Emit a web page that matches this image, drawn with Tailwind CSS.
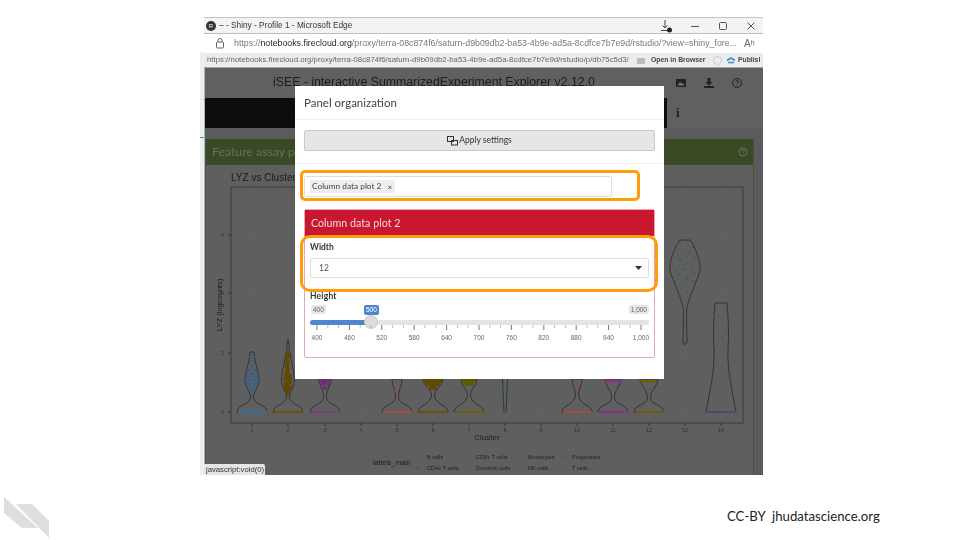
<!DOCTYPE html>
<html>
<head>
<meta charset="utf-8">
<script src="https://cdn.jsdelivr.net/npm/@tailwindcss/browser@4"></script>
</head>
<body class="bg-white">
<div class="relative w-[960px] h-[540px] overflow-hidden bg-white font-['Lato',sans-serif]">

  <!-- Sliver of the page behind the window -->
  <div class="absolute left-[200px] top-[52px] w-[4px] h-[423px] bg-[#eeeeee] blur-[0.45px]">
    <div class="mt-[47px] h-px bg-[#e6dfa0]"></div>
    <div class="mt-[37px] h-px bg-[#5b7fc4]"></div>
  </div>

  <!-- Screenshot of the browser window -->
  <div class="absolute left-[204px] top-[17px] w-[559px] h-[458px] flex flex-col blur-[0.45px] border-t border-[#c4c4c4]">
    <div class="h-[16px] shrink-0 bg-[#f3f3f3] border-b border-[#bdbdbd] flex items-center pl-[2px] font-['Liberation_Sans',sans-serif] text-[8.300px] text-[#333] whitespace-nowrap">
      <div class="w-[10px] h-[10px] shrink-0 rounded-full bg-[#333] text-white text-[6px] leading-[10px] text-center mr-[3px]">R</div>
      <span>– - Shiny - Profile 1 - Microsoft Edge</span>
      <div class="ml-auto flex items-center h-full">
        <svg class="w-[14px] h-[14px] mr-[16px]" viewBox="0 0 14 14" fill="none" stroke="#444" stroke-width="1"><path d="M5 1v8M2.500 6.500 5 9l2.500-2.500M1 11.500h7"/><circle cx="9.500" cy="11" r="2.500" fill="#222" stroke="none"/></svg>
        <svg class="w-[10px] h-[10px] mr-[18px]" viewBox="0 0 10 10" stroke="#555"><path d="M1 5.500h8"/></svg>
        <svg class="w-[10px] h-[10px] mr-[18px]" viewBox="0 0 10 10" fill="none" stroke="#555"><rect x="1.500" y="1.500" width="7" height="7" rx="1"/></svg>
        <svg class="w-[10px] h-[10px] mr-[7px]" viewBox="0 0 10 10" stroke="#555"><path d="M1.500 1.500l7 7M8.500 1.500l-7 7"/></svg>
      </div>
    </div>
    <div class="h-[19px] shrink-0 bg-white flex items-center pl-[11px] font-['Liberation_Sans',sans-serif] text-[8.800px] text-[#777] whitespace-nowrap overflow-hidden">
      <svg class="w-[10px] h-[11px] shrink-0 mr-[9px]" viewBox="0 0 10 11" fill="none" stroke="#666"><rect x="1.500" y="4" width="7" height="6" rx="1"/><path d="M3 4V2.500a2 2 0 0 1 4 0V4"/></svg>
      <span class="w-[501px] shrink-0">https://<span class="text-[#222]">notebooks.firecloud.org</span>/proxy/terra-08c874f6/saturn-d9b09db2-ba53-4b9e-ad5a-8cdfce7b7e9d/rstudio/?view=shiny_fore...</span>
      <span class="ml-[9px] text-[10px] text-[#666]">Aʰ</span>
    </div>
    <div class="h-[15px] shrink-0 bg-[#ececec] border-b border-[#9aa5b5] flex items-center pl-[3px] font-['Liberation_Sans',sans-serif] text-[7.800px] text-[#666] whitespace-nowrap overflow-hidden">
      <span class="w-[424px] overflow-hidden shrink-0">https://notebooks.firecloud.org/proxy/terra-08c874f6/saturn-d9b09db2-ba53-4b9e-ad5a-8cdfce7b7e9d/rstudio/p/db75c5d3/</span>
      <svg class="w-[9px] h-[9px] shrink-0 ml-[6px] mr-[5px]" viewBox="0 0 9 9"><rect x="0" y="2" width="8" height="6" fill="#bbb"/></svg>
      <b class="text-[#444] text-[6.800px] w-[53px] shrink-0">Open in Browser</b>
      <div class="w-[9px] h-[9px] shrink-0 rounded-full border border-[#ccc] ml-[9px]"></div>
      <svg class="w-[10px] h-[9px] shrink-0 ml-[4px] mr-[2px]" viewBox="0 0 10 9" fill="none" stroke="#3b8ec9" stroke-width="1.500"><path d="M1 4.500 5 2l4 2.500M2 6.500h6"/></svg>
      <b class="text-[#444] text-[6.800px] w-[22px] shrink-0 overflow-hidden">Publish</b>
    </div>

    <div class="flex-1 bg-[#606060] flex flex-col min-h-0 border-l border-[#a9b4c2]">
      <div class="h-[30px] shrink-0 relative flex items-center font-['Liberation_Sans',sans-serif] text-[12.300px] text-[#1c1c1c] whitespace-nowrap">
        <span class="ml-[68px] -mt-[2px]">iSEE - interactive SummarizedExperiment Explorer v2.12.0</span>
        <div class="ml-auto flex items-center gap-[16px] pr-[20px]">
          <svg class="w-[12px] h-[12px]" viewBox="0 0 12 12"><path d="M1 2h10v8H1z" fill="#222"/><path d="M2.500 8.500 5 5l2 2 1-1 1.500 2.500z" fill="#777"/></svg>
          <svg class="w-[12px] h-[12px]" viewBox="0 0 12 12" fill="#222"><path d="M4.500 1h3v4h2L6 8.500 2.500 5h2zM1 9h10v2H1z"/></svg>
          <svg class="w-[12px] h-[12px]" viewBox="0 0 12 12" fill="none" stroke="#222"><circle cx="6" cy="6" r="4.500"/><path d="M4.700 4.800a1.300 1.300 0 1 1 1.900 1.200c-.4.200-.6.500-.6 1M6 8v1"/></svg>
        </div>
      </div>
      <div class="h-[30px] shrink-0 flex">
        <div class="w-[462px] bg-[#0d0d0d]"></div>
        <div class="flex-1 flex items-center pl-[9px] font-['Liberation_Serif',serif] text-[13px] font-bold text-[#222]">i</div>
      </div>
      <div class="flex-1 min-h-0 bg-[#5a5b5c] pt-[11px] pr-[9px]">
        <div class="h-full border-x border-[#465438] bg-[#5f5f5f] flex flex-col">
          <div class="h-[26px] shrink-0 bg-[#3a4a24] flex items-center px-[6px] text-[12.300px] text-[#66735a] relative">
            <span>Feature assay plot 1</span>
            <svg class="absolute right-[5px] w-[10px] h-[10px]" viewBox="0 0 10 10" fill="none" stroke="#66735a"><circle cx="5" cy="5" r="4"/><path d="M5 7.500v.5M3.800 4a1.200 1.200 0 1 1 1.800 1c-.4.300-.6.500-.6 1"/></svg>
          </div>
          <svg class="flex-1 w-[546px] block font-['Liberation_Sans',sans-serif]" viewBox="206 165 546 310" fill="none">
            <g stroke="#666" stroke-width=".6">
              <path d="M231 412H743M231 353H743M231 293H743M231 235H743"/>
              <path d="M252 187V423M288 187V423M325 187V423M361 187V423M397 187V423M433 187V423M469 187V423M505 187V423M541 187V423M577 187V423M613 187V423M649 187V423M685 187V423M721 187V423"/>
            </g>
            <rect x="231" y="187" width="512" height="236" stroke="#3d3d3d"/>
            <path d="M228 412h3M228 353h3M228 293h3M228 235h3M252 423v3M288 423v3M325 423v3M361 423v3M397 423v3M433 423v3M469 423v3M505 423v3M541 423v3M577 423v3M613 423v3M649 423v3M685 423v3M721 423v3" stroke="#333"/>
            <text x="231" y="181" font-size="10" fill="#1c1c1c">LYZ vs Cluster</text>
            <text x="0" y="0" transform="translate(222 331) rotate(-90)" font-size="7.500" fill="#1c1c1c">LYZ (logcounts)</text>
            <g font-size="5.500" fill="#333">
              <text x="224" y="414" text-anchor="end">0</text><text x="224" y="355" text-anchor="end">2</text><text x="224" y="295" text-anchor="end">4</text><text x="224" y="237" text-anchor="end">6</text>
              <text x="252" y="432" text-anchor="middle">1</text><text x="288" y="432" text-anchor="middle">2</text><text x="325" y="432" text-anchor="middle">3</text><text x="361" y="432" text-anchor="middle">4</text><text x="397" y="432" text-anchor="middle">5</text><text x="433" y="432" text-anchor="middle">6</text><text x="469" y="432" text-anchor="middle">7</text><text x="505" y="432" text-anchor="middle">8</text><text x="541" y="432" text-anchor="middle">9</text><text x="577" y="432" text-anchor="middle">10</text><text x="613" y="432" text-anchor="middle">11</text><text x="649" y="432" text-anchor="middle">12</text><text x="685" y="432" text-anchor="middle">13</text><text x="721" y="432" text-anchor="middle">14</text>
            </g>
            <text x="487" y="440" font-size="8" text-anchor="middle" fill="#1c1c1c">Cluster</text>
            <!-- violins -->
            <g stroke="#2f2f2f" stroke-width=".9">
              <path d="M237 412C237 405 249 405 250.500 398C251 392 245 388 245 380C245 372 249 365 250 352H254C255 365 259 372 259 380C259 388 253 392 253.500 398C255 405 267 405 267 412Z"/>
              <path d="M273 412C273 405 285 405 286.500 398C287 392 281.500 388 281.500 380C281.500 370 287 355 287.500 340H288.500C289 355 294.500 370 294.500 380C294.500 388 289 392 289.500 398C291 405 303 405 303 412Z"/>
              <path d="M310 412C310 405 322 405 323.500 398C324 390 319 386 319 379H331C331 386 326 390 326.500 398C328 405 340 405 340 412Z"/>
              <path d="M382 412C382 405 394 405 395.500 398C396 390 392 386 392 379H402C402 386 398 390 398.500 398C400 405 412 405 412 412Z"/>
              <path d="M418 412C418 405 430 405 431.500 396C432 389 423 386 423 379H443C443 386 434 389 434.500 396C436 405 448 405 448 412Z"/>
              <path d="M454 412C454 405 466 405 467.500 396C468 389 461 386 461 379H477C477 386 470 389 470.500 396C472 405 484 405 484 412Z"/>
              <path d="M502.500 379L504 412H506L507.500 379"/>
              <path d="M562 412C562 405 574 405 575.500 396C576 389 572 386 572 379H582C582 386 578 389 578.500 396C580 405 592 405 592 412Z"/>
              <path d="M598 412C598 405 611 405 611.500 398C612 390 605 386 605 379H621C621 386 614 390 614.500 398C615 405 628 405 628 412Z"/>
              <path d="M634 412C634 405 647 405 647.500 398C648 390 640 386 640 379H658C658 386 650 390 650.500 398C651 405 664 405 664 412Z"/>
              <path d="M680 240H690L694 246C698 256 701 264 700 270C698 280 688 298 686.500 310C686.500 322 687 335 687 343C685 345 684 345 683 343C683 335 683.500 322 683.500 310C682 298 672 280 670 270C669 264 672 256 676 246Z"/>
              <path d="M715 303H727C728.500 320 729 335 728 350C727 370 733 395 736 412H706C709 395 715 370 714 350C713 335 713.500 320 715 303Z"/>
            </g>
            <!-- base rows -->
            <g stroke-width="2">
              <path d="M238 412H267" stroke="#2f6fa8"/>
              <path d="M274 412H303" stroke="#6b5300"/>
              <path d="M311 412H340" stroke="#7d3a85"/>
              <path d="M383 412H412" stroke="#a04c47"/>
              <path d="M419 412H448" stroke="#6b5300"/>
              <path d="M455 412H484" stroke="#6b6000"/>
              <path d="M563 412H592" stroke="#a04c47"/>
              <path d="M599 412H628" stroke="#8a3088"/>
              <path d="M635 412H664" stroke="#6b6000"/>
              <path d="M707 412H736" stroke="#5a4298" stroke-dasharray="2 2"/>
            </g>
            <!-- points -->
            <g stroke-linecap="round" stroke-width="2.300">
              <path d="M252 355h0M252 358h0M250 361h0M254 362h0M252 366h0M249 370h0M255 370h0M251 373h0M253 374h0M247 376h0M250 377h0M255 377h0M257 377h0M246 380h0M249 380h0M252 380h0M255 380h0M258 380h0M247 383h0M250 384h0M253 384h0M256 383h0M248 387h0M251 388h0M255 387h0M250 391h0M253 391h0M252 395h0" stroke="#25639c"/>
              <path stroke-width="4.500" d="M288 352V356M287.500 360V372M287 372V378M286 376V388M290 376V388M287.500 388V394" stroke="#5f4b00"/>
              <path stroke-width="1.800" d="M288 360h0M290 370h0M286 381h0M290 385h0M288 396h0M289 408h0" stroke="#8f4480"/>
              <path stroke-width="3" d="M320 381h10M322 384h6M324 388h2" stroke="#6a2f78"/>
              <path stroke-width="1.800" d="M324 399h0M322 386h0M327 384h0" stroke="#8a4a84"/>
              <path stroke-width="1.800" d="M394 381h0M399 382h0M396 385h0M398 388h0M395 391h0M397 394h0" stroke="#a04c47"/>
              <path stroke-width="4" d="M425 381h16M428 384h10M431 388h4" stroke="#5f4b00"/>
              <path stroke-width="3.500" d="M463 381h12M466 384h6" stroke="#5f5600"/>
              <path stroke-width="1.800" d="M505 385h0M504 392h0M506 398h0M505 403h0M505 411h0" stroke="#267272"/>
              <path stroke-width="1.800" d="M575 381h0M579 382h0M576 386h0M579 385h0M577 390h0M577 401h0" stroke="#a04c47"/>
              <path stroke-width="2.500" stroke-dasharray="2 2" d="M606 381h15" stroke="#8a3088"/>
              <path stroke-width="1.800" d="M612 389h0" stroke="#a04c47"/>
              <path stroke-width="2.500" stroke-dasharray="2 2" d="M641 381h16" stroke="#6b6000"/>
              <path stroke-width="1.800" d="M650 389h0" stroke="#6b6000"/>
              <path stroke-width="1.800" d="M680 242h0M693 247h0M684 250h0M688 252h0M678 256h0M695 258h0M680 260h0M686 264h0M672 266h0M698 267h0M676 272h0M684 270h0M691 270h0M679 274h0M694 273h0M687 279h0M675 281h0M694 281h0M683 285h0M687 292h0M680 295h0M685 325h0M685 343h0" stroke="#1f6a42"/>
              <path stroke-width="1.800" d="M719 316h0M722 339h0M717 345h0" stroke="#5a4298"/>
            </g>
            <!-- legend -->
            <text x="373" y="465" font-size="7" fill="#1c1c1c">labels_main</text>
            <g font-size="5.500" fill="#222">
              <text x="427" y="459">B cells</text><text x="427" y="470">CD4+ T cells</text>
              <text x="476" y="459">CD8+ T cells</text><text x="476" y="470">Dendritic cells</text>
              <text x="528" y="459">Monocytes</text><text x="528" y="470">NK cells</text>
              <text x="572" y="459">Progenitors</text><text x="572" y="470">T cells</text>
            </g>
            <g stroke-linecap="round" stroke-width="2.200">
              <path d="M418 457h0" stroke="#a04c47"/><path d="M418 468h0" stroke="#6b5300"/>
              <path d="M467 457h0" stroke="#5f5f00"/><path d="M467 468h0" stroke="#267249"/>
              <path d="M519 457h0" stroke="#267272"/><path d="M519 468h0" stroke="#2f6fa8"/>
              <path d="M563 457h0" stroke="#5a4298"/><path d="M563 468h0" stroke="#8a3088"/>
            </g>
          </svg>
        </div>
      </div>
    </div>
    <div class="absolute left-0 bottom-0 h-[11px] w-[61px] bg-[#e4e4e4] rounded-tr-[2px] font-['Liberation_Sans',sans-serif] text-[7.700px] leading-[11px] pl-[2px] text-[#333] whitespace-nowrap">javascript:void(0)</div>

    <!-- Modal -->
    <div class="absolute left-[91px] top-[68px] w-[369px] h-[293px] bg-white flex flex-col text-[#444]">
      <div class="h-[34px] shrink-0 border-b border-[#eee] flex items-center pl-[9px] text-[11.500px] text-[#444]">Panel organization</div>
      <div class="px-[9px] pt-[10px]">
        <div class="h-[21px] bg-[#e6e6e6] border border-[#c9c9c9] rounded-[2px] flex items-center justify-center text-[8.500px] text-[#333] gap-[1px]">
          <svg class="w-[11px] h-[10px]" viewBox="0 0 11 10" fill="none" stroke="#333"><rect x=".5" y=".5" width="6" height="5"/><rect x="4.500" y="4.500" width="6" height="4.500"/></svg>
          <span>Apply settings</span>
        </div>
      </div>
      <div class="mt-[12px] border-t border-[#eee]"></div>
      <div class="px-[9px] pt-[12px]">
        <div class="w-[308px] h-[21px] border border-[#ddd] rounded-[2px] flex items-center pl-[5px]">
          <div class="h-[13px] w-[85px] bg-[#eee] rounded-[2px] flex items-center pl-[2px] text-[8.300px] text-[#444] whitespace-nowrap"><span>Column data plot 2</span><span class="ml-[6px] text-[8px] text-[#333]">×</span></div>
        </div>
        <div class="mt-[12px] h-[149px] border border-[#eca3b2] rounded-[2px] flex flex-col">
          <div class="h-[26px] shrink-0 bg-[#c9172f] flex items-center pl-[6px] text-[10.700px] text-[#f5d8dc]">Column data plot 2</div>
          <div class="px-[5px] pt-[5px] flex flex-col">
            <div class="h-[13px] leading-[13px] text-[8.500px] font-bold text-[#333]">Width</div>
            <div class="mt-[4px] h-[20px] border border-[#ddd] rounded-[2px] flex items-center pl-[8px] pr-[6px] text-[8.500px] text-[#555]">
              <span>12</span>
              <svg class="ml-auto w-[7px] h-[4px]" viewBox="0 0 7 4"><path d="M0 0h7L3.500 4z" fill="#333"/></svg>
            </div>
            <div class="mt-[13px] h-[11px] leading-[11px] text-[8.500px] font-bold text-[#333] tracking-[.2px]">Height</div>
            <div class="relative mt-[3px] h-[40px] font-['Liberation_Sans',sans-serif] text-[6.500px] text-[#666]">
              <span class="absolute left-[1px] top-0 h-[9px] leading-[9px] px-[2px] bg-[#e6e6e6] rounded-[2px]">400</span>
              <span class="absolute left-[54px] top-0 h-[10px] leading-[10px] px-[2px] bg-[#4f87cc] rounded-[2px] text-white">500</span>
              <span class="absolute right-0 top-0 h-[9px] leading-[9px] px-[2px] bg-[#e6e6e6] rounded-[2px]">1,000</span>
              <div class="absolute left-0 right-0 top-[15px] h-[5px] rounded-full bg-[#e4e4e4] overflow-hidden"><div class="h-full w-[61px] bg-[#4f87cc]"></div></div>
              <div class="absolute left-[54px] top-[10px] w-[14px] h-[14px] rounded-full bg-[#dcdcdc] border border-[#c8c8c8]"></div>
              <svg class="absolute left-0 top-[20px] w-[338px] h-[6px]" viewBox="0 0 338 6" fill="none" stroke="#555" stroke-width=".8">
                <path d="M7 0v5M39.400 0v5M71.800 0v5M104.200 0v5M136.600 0v5M169 0v5M201.400 0v5M233.800 0v5M266.200 0v5M298.600 0v5M331 0v5"/>
                <path stroke="#aaa" d="M17.800 0v3M28.600 0v3M50.200 0v3M61 0v3M82.600 0v3M93.400 0v3M115 0v3M125.800 0v3M147.400 0v3M158.200 0v3M179.800 0v3M190.600 0v3M212.200 0v3M223 0v3M244.600 0v3M255.400 0v3M277 0v3M287.800 0v3M309.400 0v3M320.200 0v3"/>
              </svg>
              <div class="absolute left-[7px] top-[28px] w-[324px] flex justify-between">
                <span class="w-0 flex justify-center">400</span><span class="w-0 flex justify-center">460</span><span class="w-0 flex justify-center">520</span><span class="w-0 flex justify-center">580</span><span class="w-0 flex justify-center">640</span><span class="w-0 flex justify-center">700</span><span class="w-0 flex justify-center">760</span><span class="w-0 flex justify-center">820</span><span class="w-0 flex justify-center">880</span><span class="w-0 flex justify-center">940</span><span class="w-0 flex justify-center">1,000</span>
              </div>
            </div>
          </div>
        </div>
      </div>
    </div>

    <!-- Annotation outlines -->
    <div class="absolute left-[96px] top-[152px] w-[340px] h-[31px] border-[3px] border-[#ff9c0a] rounded-[5px]"></div>
    <div class="absolute left-[96px] top-[217px] w-[358px] h-[57px] border-[3px] border-[#ff9c0a] rounded-[10px]"></div>
  </div>

  <!-- Slide footer -->
  <svg class="absolute left-0 top-[490px] w-[60px] h-[50px]" viewBox="0 490 60 50" fill="#dedede">
    <path d="M4 497 38 528H22L4 513Z"/>
    <path d="M16 504H32L49 521V538Z"/>
  </svg>
  <div class="absolute left-[727px] top-[507px] text-[13.200px] leading-[18px] text-[#222] whitespace-nowrap">CC-BY&nbsp; jhudatascience.org</div>
</div>
</body>
</html>
